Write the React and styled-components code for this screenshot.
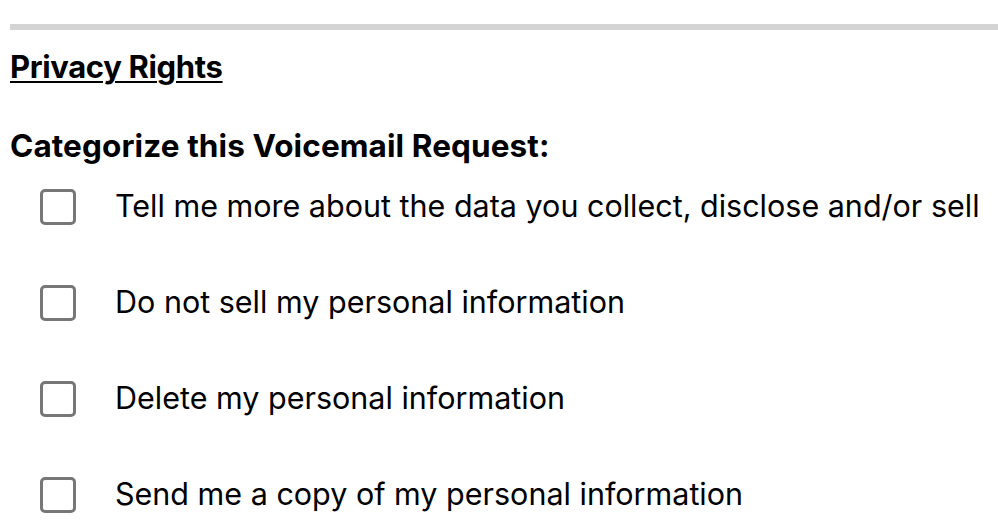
import React from "react";
import styled, { createGlobalStyle } from "styled-components";

const Global = createGlobalStyle`
  html, body { margin: 0; padding: 0; background: #fff; }
  body { font-family: Inter, "Noto Sans", sans-serif; color: #000; }
`;

const Page = styled.div`
  padding: 24px 0 0 10px;
`;

const Divider = styled.hr`
  margin: 0;
  border: none;
  height: 6px;
  background: #d4d4d4;
`;

const Heading = styled.h2`
  margin: 19px 0 0;
  font-size: 31px;
  line-height: 36px;
  font-weight: 700;
  letter-spacing: -0.35px;
  text-decoration: underline;
  text-underline-offset: 3px;
  text-decoration-thickness: 2px;
`;

const Question = styled.h3`
  margin: 43px 0 0;
  font-size: 31.5px;
  line-height: 36px;
  font-weight: 700;
  letter-spacing: 0.1px;
`;

const List = styled.div`
  margin-top: 25px;
  padding-left: 30px;
  display: flex;
  flex-direction: column;
  gap: 60px;
`;

const Row = styled.label`
  display: flex;
  align-items: center;
  gap: 39px;
  height: 36px;
  font-size: 30.5px;
  font-weight: 400;
`;

const Label = styled.span`
  padding-bottom: 4px;
`;

const Box = styled.span`
  box-sizing: border-box;
  width: 36px;
  height: 36px;
  border: 3px solid #777;
  border-radius: 5px;
  flex: none;
`;

const items = [
  "Tell me more about the data you collect, disclose and/or sell",
  "Do not sell my personal information",
  "Delete my personal information",
  "Send me a copy of my personal information",
];

export default function App() {
  return (
    <Page>
      <Global />
      <Divider />
      <Heading>Privacy Rights</Heading>
      <Question>Categorize this Voicemail Request:</Question>
      <List>
        {items.map((t) => (
          <Row key={t}>
            <Box />
            <Label>{t}</Label>
          </Row>
        ))}
      </List>
    </Page>
  );
}
